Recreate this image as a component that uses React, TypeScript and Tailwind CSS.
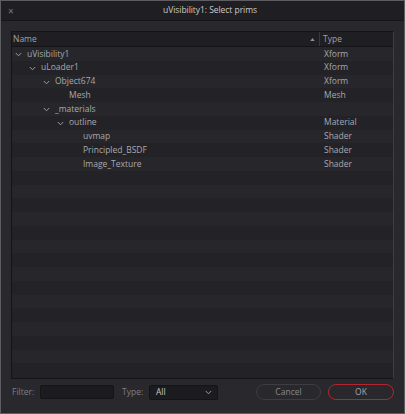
import React from "react";

const rows: { name: string; type: string; level: number; chevron: boolean }[] = [
  { name: "uVisibility1", type: "Xform", level: 0, chevron: true },
  { name: "uLoader1", type: "Xform", level: 1, chevron: true },
  { name: "Object674", type: "Xform", level: 2, chevron: true },
  { name: "Mesh", type: "Mesh", level: 3, chevron: false },
  { name: "_materials", type: "", level: 2, chevron: true },
  { name: "outline", type: "Material", level: 3, chevron: true },
  { name: "uvmap", type: "Shader", level: 4, chevron: false },
  { name: "Principled_BSDF", type: "Shader", level: 4, chevron: false },
  { name: "Image_Texture", type: "Shader", level: 4, chevron: false },
];

const Chevron = () => (
  <svg width="7" height="5" viewBox="0 0 7 5" className="block">
    <path d="M0.8 1 L3.5 3.8 L6.2 1" fill="none" stroke="#9a9a9e" strokeWidth="1" />
  </svg>
);

export default function App() {
  const total = 24;
  const all = Array.from({ length: total }, (_, i) => rows[i] ?? null);
  return (
    <div
      className="w-[405px] h-[414px] bg-[#28282d] border border-[#5e5e62] flex flex-col text-[#a9a9ad] overflow-hidden"
      style={{ fontFamily: '"Open Sans", "Noto Sans", sans-serif' }}
    >
      <div className="h-[20px] shrink-0 bg-[#1f1f23] border-b border-[#161619] relative flex items-center justify-center">
        <span className="absolute left-[7px] top-[3px] text-[10px] text-[#7a7a7e]">×</span>
        <span className="text-[8.5px] tracking-[-0.05px] text-[#cacacd] ml-[15px]">uVisibility1: Select prims</span>
      </div>
      <div className="flex-1 flex flex-col px-[10px] pt-[10px]">
        <div className="h-[348px] border border-[#141417] border-r-[#3d3d42] bg-[#222227] flex flex-col overflow-hidden">
          <div className="h-[15px] shrink-0 flex bg-[#1f1f23] border-b border-[#141417] text-[8.5px] text-[#a0a0a4]">
            <div className="w-[308px] flex items-center pl-[1px] relative border-r border-[#38383d]">
              <span>Name</span>
              <svg width="5" height="3" viewBox="0 0 6 4" className="absolute right-[4px] top-[6px]">
                <path d="M0 4 L3 0 L6 4 Z" fill="#8e8e92" />
              </svg>
            </div>
            <div className="flex-1 flex items-center pl-[3px]">Type</div>
          </div>
          <div className="flex flex-col">
            {all.map((r, i) => (
              <div
                key={i}
                className={`h-[13.75px] shrink-0 flex items-center text-[8.5px] ${i % 2 === 0 ? "bg-[#26262b]" : "bg-[#222227]"}`}
              >
                {r && (
                  <>
                    <div className="w-[309px] flex items-center relative h-full">
                      {r.chevron && (
                        <span className="absolute top-[5px]" style={{ left: 3 + 14 * r.level }}>
                          <Chevron />
                        </span>
                      )}
                      <span className="absolute" style={{ left: 15 + 14 * r.level }}>
                        {r.name}
                      </span>
                    </div>
                    <div className="pl-[3px]">{r.type}</div>
                  </>
                )}
              </div>
            ))}
          </div>
        </div>
        <div className="flex items-center h-[26px] text-[8.5px]">
          <span className="text-[#7f7f83] ml-[1px] w-[28px]">Filter:</span>
          <div className="w-[74px] h-[14px] bg-[#1c1c20] border border-[#141417] rounded-[2px]" />
          <span className="text-[#7f7f83] ml-[8px] w-[27px]">Type:</span>
          <div className="w-[69px] h-[15px] bg-[#1c1c20] border border-[#141417] rounded-[2px] flex items-center justify-between pl-[6px] pr-[5px] text-[#c4c4c8]">
            <span>All</span>
            <Chevron />
          </div>
          <div className="ml-auto flex gap-[7px]">
            <div className="w-[65px] h-[16px] rounded-full border border-[#3c3c41] flex items-center justify-center text-[#8a8a8e]">
              Cancel
            </div>
            <div className="w-[66px] h-[16px] rounded-full border border-[#b3262d] flex items-center justify-center text-[#a8a8ac]">
              OK
            </div>
          </div>
        </div>
      </div>
    </div>
  );
}
